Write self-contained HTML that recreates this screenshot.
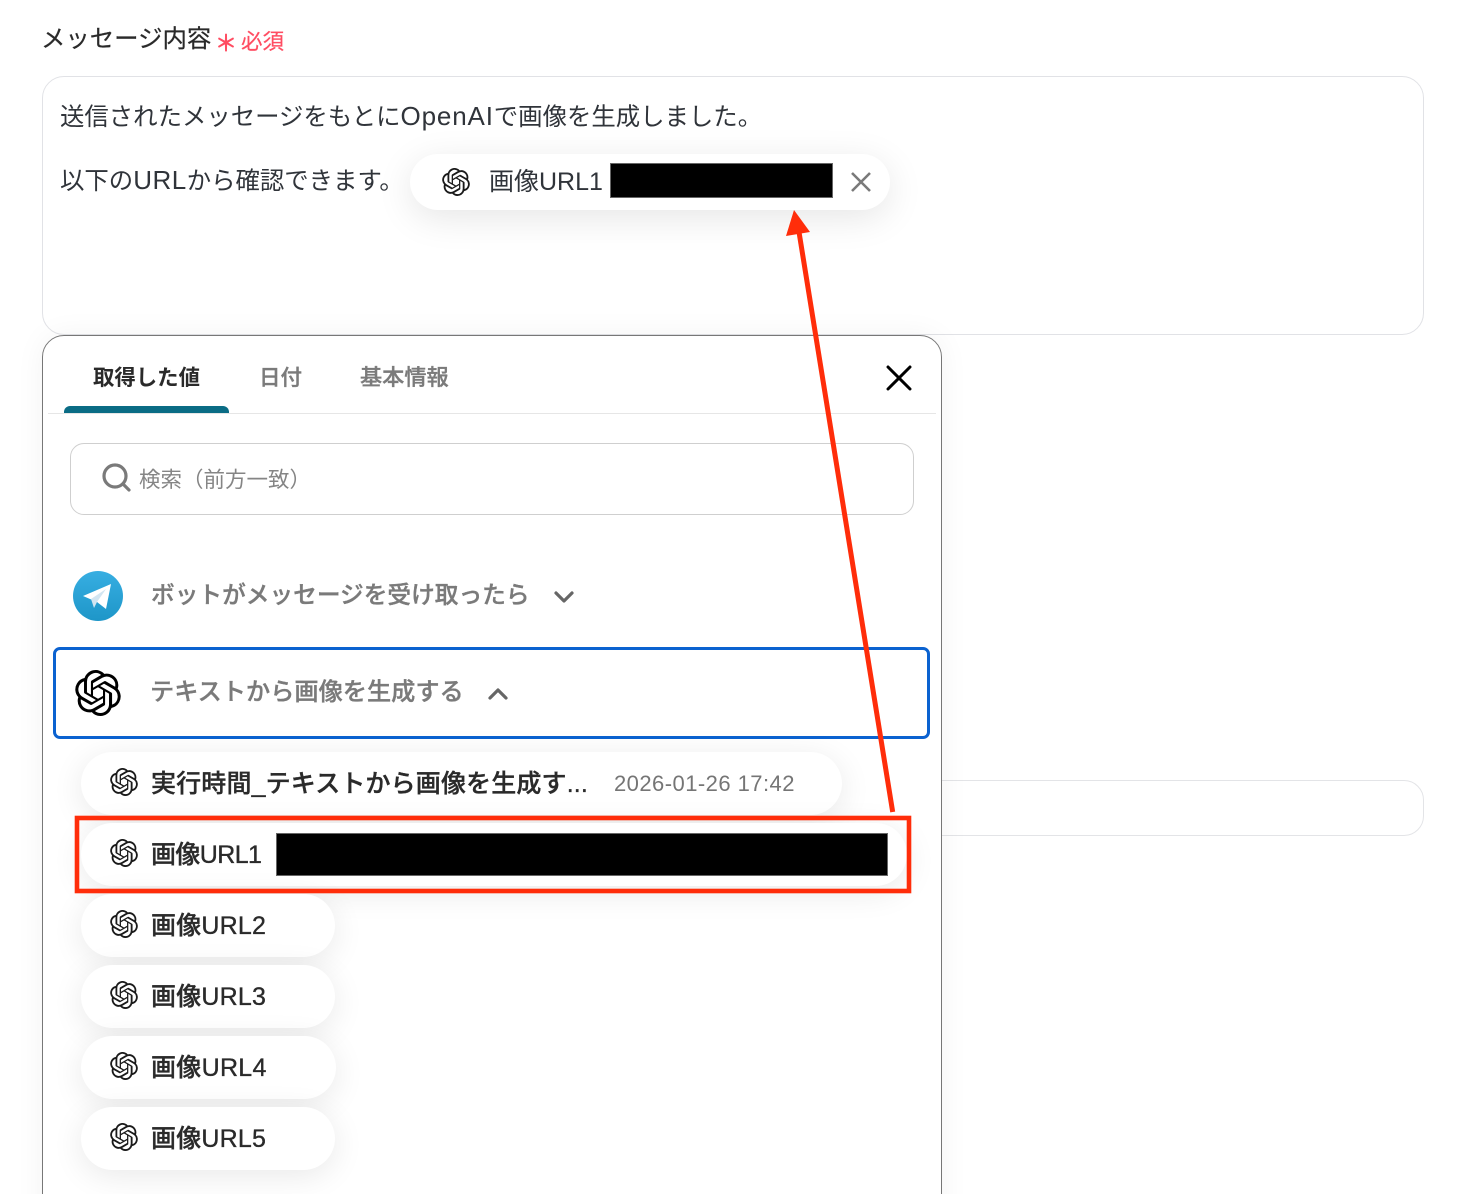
<!DOCTYPE html>
<html lang="ja"><head><meta charset="utf-8"><title>メッセージ内容</title>
<style>
html,body{margin:0;padding:0;background:#fff;width:1468px;height:1194px;overflow:hidden}
body{font-family:"Liberation Sans","Noto Sans CJK JP",sans-serif;color:#2b2e33}
#w{position:relative;width:1468px;height:1194px;overflow:hidden}
.a{position:absolute;white-space:nowrap;line-height:1}
.box{position:absolute;box-sizing:border-box;background:#fff}
.chip{position:absolute;left:81px;height:63px;border-radius:32px;background:#fff;box-shadow:0 6px 32px rgba(0,0,0,.09)}
.chip svg{position:absolute;left:29px;top:16px;width:28px;height:28px}
.chip span{position:absolute;left:70px;top:18px;font-size:25px;line-height:28px;font-weight:500;color:#2a2a2a;white-space:nowrap;-webkit-text-stroke:.35px #2a2a2a}
.blk{position:absolute;background:#000;box-shadow:0 0 0 1px #666 inset}
.m{-webkit-text-stroke:.35px #7a7a7a}
.l{font-size:26px;letter-spacing:.5px}
</style></head><body><div id="w">
<svg width="0" height="0" style="position:absolute"><defs><symbol id="oa" viewBox="0 0 24 24"><path fill="currentColor" d="M22.2819 9.8211a5.9847 5.9847 0 0 0-.5157-4.9108 6.0462 6.0462 0 0 0-6.5098-2.9A6.0651 6.0651 0 0 0 4.9807 4.1818a5.9847 5.9847 0 0 0-3.9977 2.9 6.0462 6.0462 0 0 0 .7427 7.0966 5.98 5.98 0 0 0 .511 4.9107 6.051 6.051 0 0 0 6.5146 2.9001A5.9847 5.9847 0 0 0 13.2599 24a6.0557 6.0557 0 0 0 5.7718-4.2058 5.9894 5.9894 0 0 0 3.9977-2.9001 6.0557 6.0557 0 0 0-.7475-7.0729zm-9.022 12.6081a4.4755 4.4755 0 0 1-2.8764-1.0408l.1419-.0804 4.7783-2.7582a.7948.7948 0 0 0 .3927-.6813v-6.7369l2.02 1.1686a.071.071 0 0 1 .038.052v5.5826a4.504 4.504 0 0 1-4.4945 4.4944zm-9.6607-4.1254a4.4708 4.4708 0 0 1-.5346-3.0137l.142.0852 4.783 2.7582a.7712.7712 0 0 0 .7806 0l5.8428-3.3685v2.3324a.0804.0804 0 0 1-.0332.0615L9.74 19.9502a4.4992 4.4992 0 0 1-6.1408-1.6464zM2.3408 7.8956a4.485 4.485 0 0 1 2.3655-1.9728V11.6a.7664.7664 0 0 0 .3879.6765l5.8144 3.3543-2.0201 1.1685a.0757.0757 0 0 1-.071 0l-4.8303-2.7865A4.504 4.504 0 0 1 2.3408 7.872zm16.5963 3.8558L13.1038 8.364 15.1192 7.2a.0757.0757 0 0 1 .071 0l4.8303 2.7913a4.4944 4.4944 0 0 1-.6765 8.1042v-5.6772a.79.79 0 0 0-.407-.667zm2.0107-3.0231l-.142-.0852-4.7735-2.7818a.7759.7759 0 0 0-.7854 0L9.409 9.2297V6.8974a.0662.0662 0 0 1 .0284-.0615l4.8303-2.7866a4.4992 4.4992 0 0 1 6.6802 4.66zM8.3065 12.863l-2.02-1.1638a.0804.0804 0 0 1-.038-.0567V6.0742a4.4992 4.4992 0 0 1 7.3757-3.4537l-.142.0805L8.704 5.459a.7948.7948 0 0 0-.3927.6813zm1.0976-2.3654l2.602-1.4998 2.6069 1.4998v2.9994l-2.5974 1.4997-2.6067-1.4997Z"/></symbol>
<linearGradient id="tg" x1="0" y1="0" x2="0" y2="1"><stop offset="0" stop-color="#37aee2"/><stop offset="1" stop-color="#1e96c8"/></linearGradient></defs></svg>

<div class="a" style="left:41px;top:27px;font-size:24.4px;line-height:26px;color:#2a2a2a;-webkit-text-stroke:.2px #2a2a2a">メッセージ内容</div>
<div class="a" style="left:215px;top:32px;font-size:22px;line-height:24px;color:#ff4d62;-webkit-text-stroke:.7px #ff4d62">＊</div>
<div class="a" style="left:241px;top:30px;font-size:21.5px;line-height:24px;color:#ff4d62;-webkit-text-stroke:.2px #ff4d62">必須</div>

<div class="box" style="left:42px;top:76px;width:1382px;height:259px;border:1px solid #e1e2e6;border-radius:22px"></div>
<div class="a" style="left:60px;top:102px;font-size:24.4px;line-height:28px;color:#30343a">送信されたメッセージをもとに<span class="l" style="letter-spacing:.85px">OpenAI</span>で画像を生成しました。</div>
<div class="a" style="left:60px;top:166px;font-size:24.4px;line-height:28px;color:#30343a">以下の<span class="l">URL</span>から確認できます。</div>

<div class="box" style="left:1000px;top:780px;width:424px;height:56px;border:1px solid #e3e4e7;border-radius:20px"></div>
<div class="box" style="left:930px;top:780px;width:100px;height:56px;border:1px solid #e3e4e7;border-width:1px 0;"></div>

<div class="box" style="left:410px;top:154px;width:480px;height:56px;border-radius:28px;box-shadow:0 8px 36px rgba(0,0,0,.1)"></div>
<svg class="a" style="left:442px;top:168px;color:#1a1a1a" width="28" height="28"><use href="#oa"/></svg>
<div class="a" style="left:489px;top:168px;font-size:25px;line-height:28px;color:#30343a">画像URL1</div>
<div class="blk" style="left:610px;top:163px;width:223px;height:35px"></div>
<svg class="a" style="left:849px;top:170px" width="24" height="24"><path d="M3 3L21 21M21 3L3 21" stroke="#7a7a7a" stroke-width="2.6" fill="none"/></svg>

<div class="box" style="left:42px;top:335px;width:900px;height:900px;border:1.5px solid #777;border-radius:22px;box-shadow:0 0 30px rgba(0,0,0,.05)"></div>
<div class="a" style="left:93px;top:365px;font-size:21.4px;line-height:26px;font-weight:700;color:#2a2a2a">取得した値</div>
<div class="a m" style="left:259px;top:365px;font-size:21.5px;line-height:26px;font-weight:500;color:#7b7b7b">日付</div>
<div class="a m" style="left:360px;top:365px;font-size:22.2px;line-height:26px;font-weight:500;color:#7b7b7b">基本情報</div>
<div class="box" style="left:48px;top:413px;width:888px;height:1px;background:#e6e6e6"></div>
<div class="box" style="left:64px;top:406px;width:165px;height:7px;background:#0a6c85;border-radius:6px 6px 0 0"></div>
<svg class="a" style="left:885px;top:364px" width="28" height="28"><path d="M3 3L25 25M25 3L3 25" stroke="#000" stroke-width="3" stroke-linecap="round" fill="none"/></svg>

<div class="box" style="left:70px;top:443px;width:844px;height:72px;border:1px solid #cfcfcf;border-radius:14px"></div>
<svg class="a" style="left:101px;top:462px" width="30" height="30"><circle cx="14" cy="14" r="11" stroke="#7a7a7a" stroke-width="3.2" fill="none"/><path d="M22 22L28 28" stroke="#7a7a7a" stroke-width="3.2" stroke-linecap="round"/></svg>
<div class="a" style="left:139px;top:467px;font-size:21.5px;line-height:26px;color:#858585">検索（前方一致）</div>

<svg class="a" style="left:73px;top:571px" width="50" height="50" viewBox="0 0 50 50"><circle cx="25" cy="25" r="25" fill="url(#tg)"/><path d="M10 25L38 13L33 38L24 31Z" fill="#fff"/><path d="M18 28L21 37L24 31L33 18Z" fill="#d2e5f1"/></svg>
<div class="a m" style="left:151px;top:582px;font-size:23.7px;line-height:28px;font-weight:500;color:#7a7a7a">ボットがメッセージを受け取ったら</div>
<svg class="a" style="left:553px;top:590px" width="22" height="14"><path d="M3 3L11 11L19 3" stroke="#666" stroke-width="3.2" fill="none" stroke-linecap="round" stroke-linejoin="round"/></svg>

<div class="box" style="left:53px;top:647px;width:877px;height:92px;border:3px solid #0b62d0;border-radius:7px"></div>
<svg class="a" style="left:75px;top:670px;color:#000" width="46" height="46"><use href="#oa"/></svg>
<div class="a m" style="left:150px;top:679px;font-size:24.2px;line-height:28px;font-weight:500;color:#7a7a7a">テキストから画像を生成する</div>
<svg class="a" style="left:487px;top:687px" width="22" height="14"><path d="M3 11L11 3L19 11" stroke="#666" stroke-width="3.2" fill="none" stroke-linecap="round" stroke-linejoin="round"/></svg>

<div class="chip" style="top:752px;width:761px"><svg style="color:#1a1a1a"><use href="#oa"/></svg><span style="letter-spacing:.15px">実行時間_テキストから画像を生成す...</span></div>
<div class="a" style="left:614px;top:771px;font-size:22px;line-height:26px;letter-spacing:.45px;color:#757575">2026-01-26 17:42</div>
<div class="chip" style="top:823px;width:826px"><svg style="color:#1a1a1a"><use href="#oa"/></svg><span style="letter-spacing:-.6px">画像URL1</span></div>
<div class="blk" style="left:276px;top:833px;width:612px;height:43px"></div>
<div class="chip" style="top:894px;width:254px"><svg style="color:#1a1a1a"><use href="#oa"/></svg><span style="letter-spacing:.2px">画像URL2</span></div>
<div class="chip" style="top:965px;width:254px"><svg style="color:#1a1a1a"><use href="#oa"/></svg><span style="letter-spacing:.2px">画像URL3</span></div>
<div class="chip" style="top:1036px;width:255px"><svg style="color:#1a1a1a"><use href="#oa"/></svg><span style="letter-spacing:.3px">画像URL4</span></div>
<div class="chip" style="top:1107px;width:254px"><svg style="color:#1a1a1a"><use href="#oa"/></svg><span style="letter-spacing:.2px">画像URL5</span></div>

<svg class="a" style="left:0;top:0" width="1468" height="1194">
<rect x="77" y="818" width="832" height="73" fill="none" stroke="#ff2d0a" stroke-width="4.6"/>
<path d="M892.7 812L799 232" stroke="#ff2d0a" stroke-width="5" fill="none"/>
<path d="M794 210L810 232L786 236Z" fill="#ff2d0a"/>
</svg>
</div></body></html>
